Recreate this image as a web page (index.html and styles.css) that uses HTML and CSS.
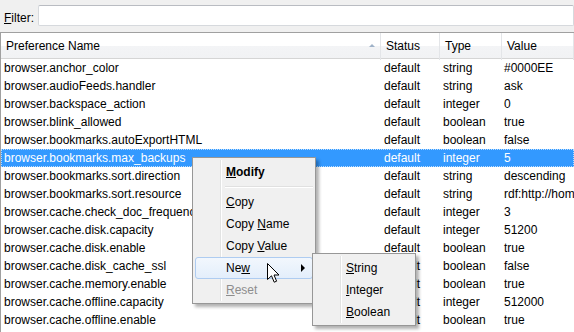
FILE: index.html
```html
<!DOCTYPE html>
<html lang="en-US">
<head>
<meta charset="utf-8">
<title>about:config</title>
<link rel="stylesheet" href="styles.css">
</head>
<body>

<div class="filterbar">
  <label class="filterlabel"><u>F</u>ilter:</label>
  <div class="filterbox"></div>
</div>

<div class="tree">
  <div class="head">
    <div class="hcell">Preference Name<span class="sort"></span></div>
    <div class="hcell">Status</div>
    <div class="hcell">Type</div>
    <div class="hcell">Value</div>
  </div>

  <div class="row"><div>browser.anchor_color</div><div>default</div><div>string</div><div>#0000EE</div></div>
  <div class="row"><div>browser.audioFeeds.handler</div><div>default</div><div>string</div><div>ask</div></div>
  <div class="row"><div>browser.backspace_action</div><div>default</div><div>integer</div><div>0</div></div>
  <div class="row"><div>browser.blink_allowed</div><div>default</div><div>boolean</div><div>true</div></div>
  <div class="row"><div>browser.bookmarks.autoExportHTML</div><div>default</div><div>boolean</div><div>false</div></div>
  <div class="row selected"><div>browser.bookmarks.max_backups</div><div>default</div><div>integer</div><div>5</div></div>
  <div class="row"><div>browser.bookmarks.sort.direction</div><div>default</div><div>string</div><div>descending</div></div>
  <div class="row"><div>browser.bookmarks.sort.resource</div><div>default</div><div>string</div><div>rdf:http://home.netscape.com/NC-rdf#Name</div></div>
  <div class="row"><div>browser.cache.check_doc_frequency</div><div>default</div><div>integer</div><div>3</div></div>
  <div class="row"><div>browser.cache.disk.capacity</div><div>default</div><div>integer</div><div>51200</div></div>
  <div class="row"><div>browser.cache.disk.enable</div><div>default</div><div>boolean</div><div>true</div></div>
  <div class="row"><div>browser.cache.disk_cache_ssl</div><div>default</div><div>boolean</div><div>false</div></div>
  <div class="row"><div>browser.cache.memory.enable</div><div>default</div><div>boolean</div><div>true</div></div>
  <div class="row"><div>browser.cache.offline.capacity</div><div>default</div><div>integer</div><div>512000</div></div>
  <div class="row"><div>browser.cache.offline.enable</div><div>default</div><div>boolean</div><div>true</div></div>
</div>

<!-- context menu -->
<div class="menu ctx">
  <div class="item bold"><u>M</u>odify</div>
  <div class="sep"></div>
  <div class="item"><u>C</u>opy</div>
  <div class="item">Copy <u>N</u>ame</div>
  <div class="item">Copy <u>V</u>alue</div>
  <div class="item hover">Ne<u>w</u><span class="arrow"></span></div>
  <div class="item disabled"><u>R</u>eset</div>
</div>

<div class="menu sub">
  <div class="item"><u>S</u>tring</div>
  <div class="item"><u>I</u>nteger</div>
  <div class="item"><u>B</u>oolean</div>
</div>

<svg class="cursor" width="13" height="21" viewBox="0 0 13 21">
  <path d="M0.5 0.5 L0.5 16.5 L4.5 12.8 L7.2 19.2 L9.6 18.2 L7 12 L12 12 Z" fill="#fff" stroke="#000" stroke-width="1"/>
</svg>

</body>
</html>
```

FILE: styles.css
```css
body {
  margin: 0;
  width: 574px;
  height: 332px;
  overflow: hidden;
  background-color: #f0f0f0;
  font-family: "Liberation Sans", Arial, sans-serif;
  font-size: 12px;
  color: #000000;
  position: relative;
}

/* Filter */
.filterbar {
  display: flex;
  align-items: center;
  height: 32px;
  padding-left: 4px;
}

.filterlabel {
  width: 36px;
  margin-top: 3px;
}

.filterbox {
  width: 560px;
  height: 19px;
  margin-top: -1px;
  background-color: #ffffff;
  border: 1px solid #d6d9dd;
  border-top-color: #b9bcc2;
  border-radius: 2px;
}

/* Tree */
.tree {
  background-color: #ffffff;
  border-top: 1px solid #a0a0a0;
  border-left: 1px solid #a0a0a0;
  height: 400px;
}

.head {
  display: grid;
  grid-template-columns: 380px 59px 62px 1fr;
  height: 25px;
  background: linear-gradient(#ffffff 0%, #ffffff 50%, #f3f4f6 51%, #f1f2f4 100%);
  border-bottom: 1px solid #d5d5d5;
}

.hcell {
  position: relative;
  line-height: 27px;
  padding-left: 5px;
  border-right: 1px solid #e3e5e8;
}

.sort {
  position: absolute;
  right: 5px;
  top: 11px;
  border-left: 3px solid transparent;
  border-right: 3px solid transparent;
  border-bottom: 3px solid #9fb2c8;
}

.row {
  display: grid;
  grid-template-columns: 380px 59px 61px 1fr;
  height: 18px;
  line-height: 19px;
  white-space: nowrap;
}

.row div {
  padding-left: 3px;
  overflow: hidden;
}

.row.selected {
  background-color: #3399ff;
  color: #ffffff;
  outline: 1px dotted #b8dcff;
  outline-offset: -1px;
}

/* Menus */
.menu {
  position: absolute;
  background-color: #f0f0f0;
  border: 1px solid #979797;
  box-shadow: 3px 3px 3px rgba(0, 0, 0, 0.3);
  padding: 3px 2px 2px 2px;
}

.menu::before {
  content: "";
  position: absolute;
  top: 2px;
  bottom: 2px;
  left: 27px;
  border-left: 1px solid #e2e3e3;
  border-right: 1px solid #ffffff;
}

.ctx {
  left: 192px;
  top: 157px;
  width: 118px;
}

.sub {
  left: 312px;
  top: 253px;
  width: 98px;
}

.item {
  position: relative;
  height: 20px;
  line-height: 20px;
  padding-left: 30px;
  border: 1px solid transparent;
  border-radius: 3px;
}

.bold {
  font-weight: bold;
}

.sep {
  margin: 3px 0 3px 30px;
  border-top: 1px solid #e0e0e0;
  border-bottom: 1px solid #ffffff;
}

.hover {
  border-color: #aeccf1;
  background: linear-gradient(#f2f7fd, #e3eefb);
}

.disabled {
  color: #8d8d8d;
}

.arrow {
  position: absolute;
  right: 7px;
  top: 6px;
  border-top: 4px solid transparent;
  border-bottom: 4px solid transparent;
  border-left: 4px solid #000000;
}

.cursor {
  position: absolute;
  left: 267px;
  top: 263px;
}
```
